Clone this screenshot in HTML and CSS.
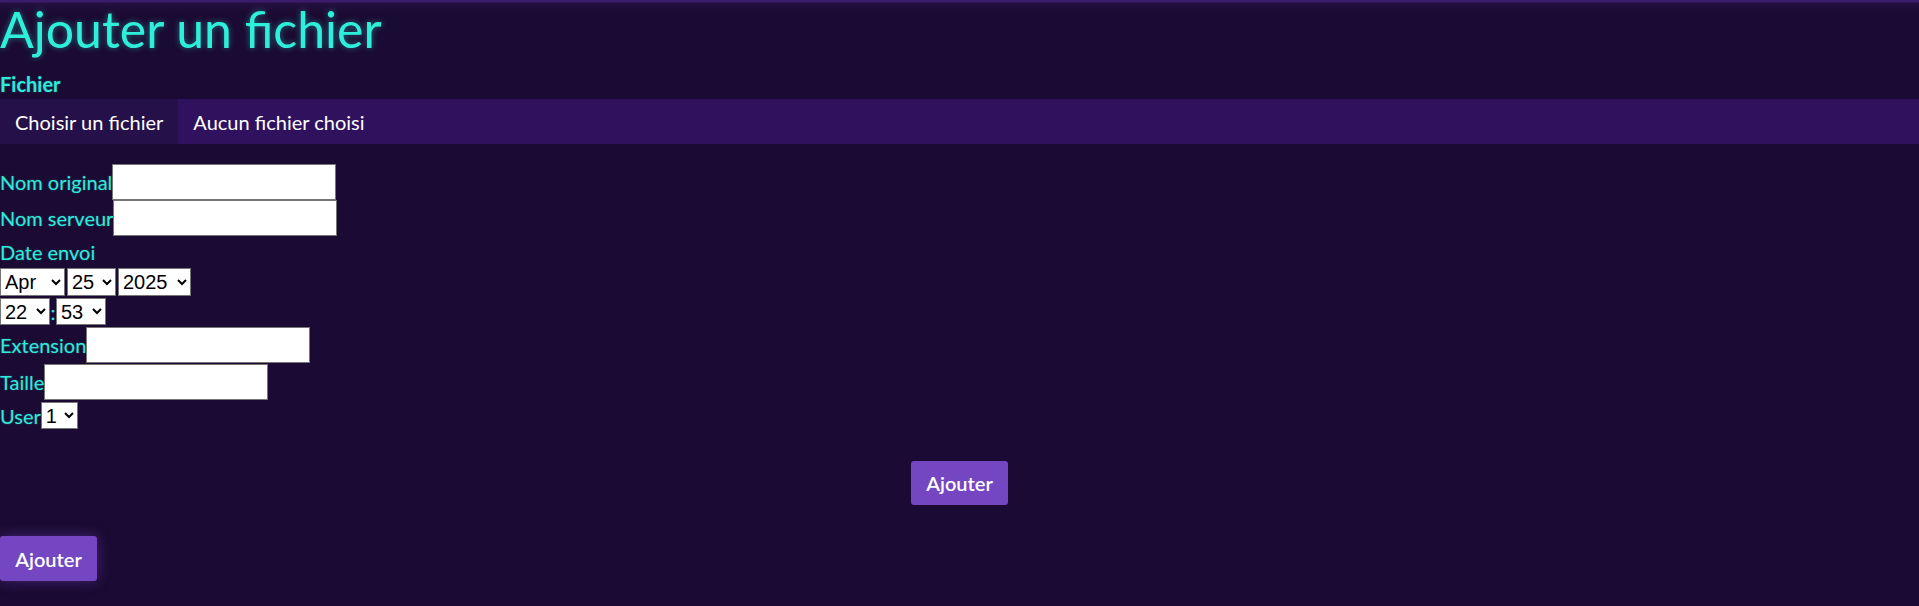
FILE: index.html
```html
<!DOCTYPE html>
<html lang="fr">
<head>
  <meta charset="UTF-8" />
  <meta name="viewport" content="width=device-width, initial-scale=1.0"/>
  <title>Ajouter un fichier</title>
  <link rel="stylesheet" href="styles.css">
</head>
<body>
  <h1 class="title">Ajouter un fichier</h1>

  <form class="file-form">
    <label class="file-label">Fichier</label>
    <div class="file-picker">
      <span class="file-btn">Choisir un fichier</span>
      <span class="file-name">Aucun fichier choisi</span>
    </div>

    <div class="row first">
      <label>Nom original</label>
      <input type="text" class="text-input">
    </div>
    <div class="row">
      <label>Nom serveur</label>
      <input type="text" class="text-input">
    </div>

    <label class="date-label">Date envoi</label>
    <div class="row date-row">
      <select class="sel sel-month"><option>Apr</option></select>
      <select class="sel sel-day"><option>25</option></select>
      <select class="sel sel-year"><option>2025</option></select>
    </div>
    <div class="row time-row">
      <select class="sel sel-time"><option>22</option></select>
      <span class="colon">:</span>
      <select class="sel sel-time"><option>53</option></select>
    </div>

    <div class="row ext-row">
      <label>Extension</label>
      <input type="text" class="text-input">
    </div>
    <div class="row size-row">
      <label>Taille</label>
      <input type="text" class="text-input">
    </div>
    <div class="row user-row">
      <label>User</label>
      <select class="sel sel-user"><option>1</option></select>
    </div>

    <div class="center">
      <button type="button" class="btn">Ajouter</button>
    </div>
  </form>

  <button type="button" class="btn btn-glow">Ajouter</button>
</body>
</html>
```

FILE: styles.css
```css
body {
  margin: 0;
  min-height: 606px;
  font-family: Lato, "Noto Sans", sans-serif;
  font-size: 20px;
  color: #2eeada;
  text-shadow: 0 0 2px rgba(46, 234, 218, 0.35);
  background:
    linear-gradient(to bottom, #3b1c6c 0, #3b1c6c 2px, #241040 3px, #1b0a33 14px) top / 100% 14px no-repeat,
    #1b0a33;
}
.title {
  margin: 0;
  font-size: 50px;
  font-weight: 400;
  line-height: 58px;
  color: #2ef0da;
  text-shadow: 0 0 6px rgba(46, 240, 218, 0.45);
}
.file-form {
  display: flex;
  flex-direction: column;
}
.file-label {
  margin-top: 14px;
  font-weight: 700;
  line-height: 24px;
}
.file-picker {
  margin-top: 3px;
  display: flex;
  height: 45px;
  background: #30115e;
  color: #fff;
  text-shadow: none;
  white-space: nowrap;
}
.file-btn {
  display: flex;
  align-items: center;
  padding: 0 15px;
  background: #26104a;
}
.file-name {
  display: flex;
  align-items: center;
  padding-left: 15px;
}
.row {
  display: flex;
  align-items: center;
}
.row.first { margin-top: 20px; }
.text-input {
  box-sizing: border-box;
  width: 224px;
  height: 36px;
  margin: 0;
  border: 1px solid #767676;
  background: #fff;
}
.date-label {
  margin-top: 5px;
  line-height: 22px;
}
.date-row { margin-top: 5px; gap: 2px; }
.time-row { margin-top: 2px; }
.ext-row { margin-top: 2px; }
.size-row { margin-top: 1px; }
.user-row { margin-top: 2px; }
.sel {
  box-sizing: border-box;
  height: 28px;
  margin: 0;
  font-family: "Liberation Sans", Arial, sans-serif;
  font-size: 20px;
  color: #000;
  text-shadow: none;
  background: #fff;
  border: 1px solid #767676;
  border-radius: 0;
}
.sel-month { width: 65px; }
.sel-day { width: 49px; }
.sel-year { width: 73px; }
.sel-time { width: 50px; height: 27px; }
.sel-user { width: 37px; height: 27px; }
.colon {
  width: 6px;
  text-align: center;
}
.center {
  margin-top: 32px;
  display: flex;
  justify-content: center;
}
.btn {
  height: 44px;
  padding: 0 15px;
  border: none;
  border-radius: 3px;
  background: #7446c2;
  color: #fff;
  font-family: Lato, "Noto Sans", sans-serif;
  font-size: 20px;
  font-weight: 600;
}
.btn-glow {
  display: block;
  margin-top: 31px;
  width: 97px;
  height: 45px;
  box-shadow: 0 0 14px rgba(116, 70, 194, 0.45);
}
```
